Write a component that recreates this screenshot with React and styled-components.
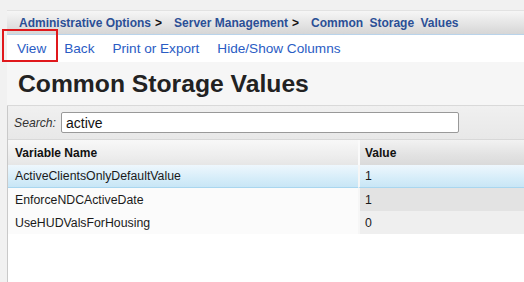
import React from "react";
import styled, { createGlobalStyle } from "styled-components";

const Global = createGlobalStyle`
  html, body { margin: 0; padding: 0; }
  body {
    background: #f1f1f1;
    font-family: Arial, "Liberation Sans", sans-serif;
    width: 524px;
    height: 282px;
    overflow: hidden;
  }
`;

const Page = styled.div`
  position: relative;
  display: flex;
  flex-direction: column;
  padding: 10px 0 0 7px;
  height: 282px;
  box-sizing: border-box;
`;

const Breadcrumb = styled.div`
  display: flex;
  align-items: center;
  gap: 12px;
  height: 25px;
  padding-left: 12px;
  background: linear-gradient(#f6f6f6, #e6e6e6 50%, #d6d6d6);
  border-top: 1px solid #e2e2e2;
  border-bottom: 1px solid #b9d3ea;
  box-sizing: border-box;
  font-size: 12px;
  font-weight: bold;
`;

const Crumb = styled.span`
  color: #2b4f96;
  word-spacing: ${(p) => (p.$wide ? "3px" : "0")};
`;

const Sep = styled.span`
  color: #111;
  margin-left: -8px;
`;

const Toolbar = styled.div`
  display: flex;
  align-items: center;
  gap: 18px;
  height: 27px;
  padding-left: 10px;
  background: #fff;
  font-size: 13.6px;
`;

const ToolLink = styled.a`
  color: #2a5cc4;
  text-decoration: none;
`;

const Title = styled.h1`
  margin: 0;
  height: 44px;
  padding-left: 11px;
  display: flex;
  align-items: center;
  background: #f6f6f6;
  border-bottom: 1px solid #d9d9d9;
  font-size: 24.7px;
  font-weight: bold;
  color: #222;
  box-sizing: border-box;
`;

const Frame = styled.div`
  flex: 1;
  border-left: 1px solid #c9c9c9;
  background: #fff;
`;

const SearchRow = styled.div`
  display: flex;
  align-items: center;
  gap: 5px;
  height: 34px;
  padding-left: 6px;
  background: linear-gradient(#f0f0f0, #e8e8e8);
  border-bottom: 1px solid #d8d8d8;
  box-sizing: border-box;
`;

const SearchLabel = styled.label`
  font-style: italic;
  font-size: 12.2px;
  color: #333;
`;

const SearchInput = styled.input`
  width: 398px;
  height: 21px;
  box-sizing: border-box;
  border: 1px solid #999;
  border-radius: 2px;
  padding: 0 4px;
  font-family: Arial, "Liberation Sans", sans-serif;
  font-size: 14px;
  color: #111;
  background: #fff;
`;

const Table = styled.div`
  display: grid;
  grid-template-columns: 350px 1fr;
`;

const HeadCell = styled.div`
  height: 25px;
  display: flex;
  align-items: center;
  padding-left: ${(p) => (p.$value ? "5px" : "7px")};
  background: ${(p) =>
    p.$value
      ? "linear-gradient(#f2f2f2, #e2e2e2 60%, #dadada)"
      : "linear-gradient(#f8f8f8, #eeeeee 60%, #e6e6e6)"};
  border-left: ${(p) => (p.$value ? "2px solid #fafafa" : "none")};
  font-size: 12px;
  font-weight: bold;
  color: #111;
`;

const Cell = styled.div`
  height: ${(p) => (p.$selected ? "22px" : "23px")};
  display: flex;
  align-items: center;
  padding-left: ${(p) => (p.$value ? "5px" : "7px")};
  font-size: 12.3px;
  color: #1a1a1a;
  border-left: ${(p) => (p.$value ? "2px solid #f6f6f6" : "none")};
  border-bottom: ${(p) => (p.$selected ? "1px solid #a9d6ef" : "none")};
  background: ${(p) =>
    p.$selected
      ? "linear-gradient(#eef7fd, #d6edf9 60%, #c9e6f6)"
      : p.$value
      ? p.$shade
      : "#fbfbfb"};
`;

const Highlight = styled.div`
  position: absolute;
  left: 2px;
  top: 29px;
  width: 56px;
  height: 33px;
  border: 2px solid #e0181c;
  box-sizing: border-box;
  pointer-events: none;
`;

const rows = [
  { name: "ActiveClientsOnlyDefaultValue", value: "1", selected: true },
  { name: "EnforceNDCActiveDate", value: "1", shade: "#e3e3e3" },
  { name: "UseHUDValsForHousing", value: "0", shade: "#efefef" },
];

export default function App() {
  return (
    <>
      <Global />
      <Page>
        <Breadcrumb>
          <Crumb>Administrative Options</Crumb>
          <Sep>&gt;</Sep>
          <Crumb>Server Management</Crumb>
          <Sep>&gt;</Sep>
          <Crumb $wide>Common Storage Values</Crumb>
        </Breadcrumb>
        <Toolbar>
          <ToolLink href="#">View</ToolLink>
          <ToolLink href="#">Back</ToolLink>
          <ToolLink href="#">Print or Export</ToolLink>
          <ToolLink href="#">Hide/Show Columns</ToolLink>
        </Toolbar>
        <Title>Common Storage Values</Title>
        <Frame>
          <SearchRow>
            <SearchLabel>Search:</SearchLabel>
            <SearchInput defaultValue="active" />
          </SearchRow>
          <Table>
            <HeadCell>Variable Name</HeadCell>
            <HeadCell $value>Value</HeadCell>
            {rows.map((r) => (
              <React.Fragment key={r.name}>
                <Cell $selected={r.selected}>{r.name}</Cell>
                <Cell $value $selected={r.selected} $shade={r.shade}>
                  {r.value}
                </Cell>
              </React.Fragment>
            ))}
          </Table>
        </Frame>
        <Highlight />
      </Page>
    </>
  );
}
